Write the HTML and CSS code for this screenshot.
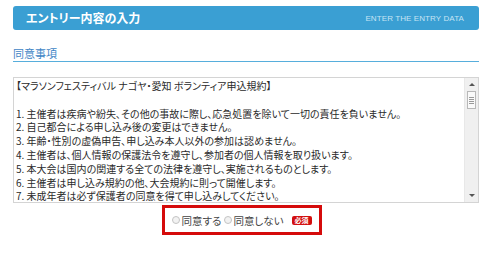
FILE: index.html
```html
<!DOCTYPE html>
<html lang="ja">
<head>
<meta charset="utf-8">
<title>エントリー内容の入力</title>
<link rel="stylesheet" href="styles.css">
</head>
<body>
<div class="page">
  <div class="head">
    <h1 class="head-title">エントリー内容の入力</h1>
    <span class="head-en">ENTER THE ENTRY DATA</span>
  </div>

  <h2 class="section-title">同意事項</h2>

  <div class="terms">
    <div class="terms-body">
      <div class="line">【マラソンフェスティバル ナゴヤ・愛知 ボランティア申込規約】</div>
      <div class="line">&nbsp;</div>
      <div class="line">1. 主催者は疾病や紛失、その他の事故に際し、応急処置を除いて一切の責任を負いません。</div>
      <div class="line">2. 自己都合による申し込み後の変更はできません。</div>
      <div class="line">3. 年齢・性別の虚偽申告、申し込み本人以外の参加は認めません。</div>
      <div class="line">4. 主催者は、個人情報の保護法令を遵守し、参加者の個人情報を取り扱います。</div>
      <div class="line">5. 本大会は国内の関連する全ての法律を遵守し、実施されるものとします。</div>
      <div class="line">6. 主催者は申し込み規約の他、大会規約に則って開催します。</div>
      <div class="line">7. 未成年者は必ず保護者の同意を得て申し込みしてください。</div>
    </div>
    <div class="scrollbar">
      <span class="arrow arrow-up"></span>
      <span class="thumb"><i></i><i></i><i></i><i></i></span>
      <span class="track"></span>
      <span class="arrow arrow-down"></span>
    </div>
  </div>

  <div class="agree-row">
    <div class="agree-box">
      <label class="opt"><span class="radio"></span>同意する</label>
      <label class="opt"><span class="radio"></span>同意しない</label>
      <span class="badge">必須</span>
    </div>
  </div>
</div>
</body>
</html>
```

FILE: styles.css
```css
html, body {
  margin: 0;
  padding: 0;
  background: #ffffff;
}

body {
  font-family: "Noto Sans CJK JP", "Noto Sans", sans-serif;
  color: #333333;
}

.page {
  width: 466px;
  padding: 6px 0 0 13px;
}

.head {
  height: 24px;
  background: #3a9fd3;
  border-radius: 3px;
  display: flex;
  align-items: center;
  justify-content: space-between;
  padding: 0 15px 0 13px;
}

.head-title {
  margin: 0;
  font-size: 12px;
  line-height: 24px;
  font-weight: 700;
  color: #ffffff;
  font-feature-settings: "palt";
}

.head-en {
  font-family: "Liberation Sans", Arial, sans-serif;
  font-size: 8px;
  color: #c6e4f4;
  letter-spacing: 0.1px;
}

.section-title {
  margin: 16px 0 0 0;
  font-size: 11px;
  line-height: 14px;
  font-weight: 400;
  color: #3f86c6;
  padding-bottom: 1px;
  border-bottom: 1px solid #57aedc;
}

.terms {
  margin-top: 15px;
  height: 126px;
  box-sizing: border-box;
  border: 1px solid #d4d4d4;
  display: flex;
  overflow: hidden;
}

.terms-body {
  flex: 1;
  padding: 1px 2px;
  font-size: 10px;
  line-height: 13.8px;
  color: #2a2a2a;
  font-feature-settings: "palt";
  white-space: nowrap;
  overflow: hidden;
}

.scrollbar {
  width: 13px;
  background: #f0f0f0;
  border-left: 1px solid #e8e8e8;
  display: flex;
  flex-direction: column;
  align-items: center;
}

.arrow {
  width: 0;
  height: 0;
  border-left: 3px solid transparent;
  border-right: 3px solid transparent;
}

.arrow-up {
  margin-top: 5px;
  border-bottom: 3px solid #555555;
}

.arrow-down {
  margin-bottom: 5px;
  border-top: 3px solid #555555;
}

.thumb {
  margin-top: 5px;
  width: 9px;
  height: 18px;
  box-sizing: border-box;
  background: #fafafa;
  border: 1px solid #b8b8b8;
  display: flex;
  flex-direction: column;
  justify-content: center;
  align-items: center;
  gap: 1px;
}

.thumb i {
  display: block;
  width: 5px;
  height: 1px;
  background: #9a9a9a;
}

.track {
  flex: 1;
}

.agree-row {
  display: flex;
  justify-content: center;
  padding-right: 8px;
  margin-top: 2px;
}

.agree-box {
  width: 160px;
  height: 30px;
  box-sizing: border-box;
  border: 3px solid #d50b0b;
  display: flex;
  align-items: center;
  justify-content: center;
  gap: 3px;
  font-size: 10.5px;
  color: #444444;
  font-feature-settings: "palt";
}

.opt {
  display: flex;
  align-items: center;
}

.radio {
  display: inline-block;
  width: 6px;
  height: 6px;
  border-radius: 50%;
  border: 1px solid #c4c4c4;
  background: #f2f2f2;
  margin-right: 1px;
}

.badge {
  margin-left: 5px;
  background: #d20f0f;
  color: #ffffff;
  font-size: 7px;
  font-weight: 700;
  line-height: 9px;
  padding: 0 3px;
  border-radius: 2px;
}
```
